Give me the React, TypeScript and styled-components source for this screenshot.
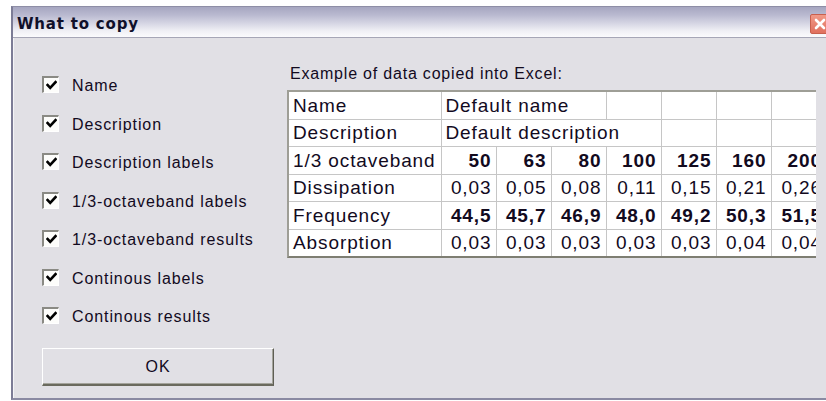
import React from 'react'
import styled, { createGlobalStyle } from 'styled-components'

const GlobalStyle = createGlobalStyle`
  html, body {
    margin: 0;
    padding: 0;
    background: #ffffff;
    overflow: hidden;
  }
`

const options = [
  'Name',
  'Description',
  'Description labels',
  '1/3-octaveband labels',
  '1/3-octaveband results',
  'Continous labels',
  'Continous results',
]

const bands = ['50', '63', '80', '100', '125', '160', '200']

const dataRows = [
  { label: 'Dissipation', bold: false, values: ['0,03', '0,05', '0,08', '0,11', '0,15', '0,21', '0,26'] },
  { label: 'Frequency', bold: true, values: ['44,5', '45,7', '46,9', '48,0', '49,2', '50,3', '51,5'] },
  { label: 'Absorption', bold: false, values: ['0,03', '0,03', '0,03', '0,03', '0,03', '0,04', '0,04'] },
]

const CheckMark = () => (
  <svg width="11" height="11" viewBox="0 0 11 11">
    <polyline points="1.5,5 4.2,7.8 9.5,2.2" fill="none" stroke="#000" strokeWidth="2.6" strokeLinecap="square" />
  </svg>
)

const CloseGlyph = () => (
  <svg width="12" height="12" viewBox="0 0 12 12">
    <path d="M2 2 L10 10 M10 2 L2 10" stroke="#fff" strokeWidth="2.6" strokeLinecap="round" />
  </svg>
)

const App: React.FC = () => {
  return (
    <>
      <GlobalStyle />
      <StyledWindow>
        <StyledTitleBar>
          <StyledTitle>What to copy</StyledTitle>
          <StyledClose>
            <CloseGlyph />
          </StyledClose>
        </StyledTitleBar>
        <StyledBody>
          <StyledOptions>
            {options.map((label) => (
              <StyledOption key={label}>
                <StyledCheckbox>
                  <CheckMark />
                </StyledCheckbox>
                <StyledLabel>{label}</StyledLabel>
              </StyledOption>
            ))}
            <StyledButton>OK</StyledButton>
          </StyledOptions>
          <StyledPreview>
            <StyledCaption>Example of data copied into Excel:</StyledCaption>
            <StyledTableFrame>
              <StyledTable>
                <colgroup>
                  <col style={{ width: 152 }} />
                  {bands.map((b) => (
                    <col key={b} style={{ width: 55 }} />
                  ))}
                </colgroup>
                <tbody>
                  <tr>
                    <StyledCell>Name</StyledCell>
                    <StyledCell colSpan={3}>Default name</StyledCell>
                    <StyledCell />
                    <StyledCell />
                    <StyledCell />
                    <StyledCell />
                  </tr>
                  <tr>
                    <StyledCell>Description</StyledCell>
                    <StyledCell colSpan={4}>Default description</StyledCell>
                    <StyledCell />
                    <StyledCell />
                    <StyledCell />
                  </tr>
                  <tr>
                    <StyledCell>1/3 octaveband</StyledCell>
                    {bands.map((b) => (
                      <StyledCell key={b} $numeric $bold>{b}</StyledCell>
                    ))}
                  </tr>
                  {dataRows.map((row) => (
                    <tr key={row.label}>
                      <StyledCell>{row.label}</StyledCell>
                      {row.values.map((v, i) => (
                        <StyledCell key={i} $numeric $bold={row.bold}>{v}</StyledCell>
                      ))}
                    </tr>
                  ))}
                </tbody>
              </StyledTable>
            </StyledTableFrame>
          </StyledPreview>
        </StyledBody>
      </StyledWindow>
    </>
  )
}

export default App

const StyledWindow = styled.div`
  margin: 6px 0 0 11px;
  width: 819px;
  border-top: 1px solid #8e8ea6;
  border-left: 2px solid #7c7c96;
  border-bottom: 2px solid #8a8aa2;
  font-family: 'Liberation Sans', Arial, sans-serif;
  color: #120a1e;
`

const StyledTitleBar = styled.div`
  height: 31px;
  box-sizing: border-box;
  display: flex;
  align-items: center;
  justify-content: space-between;
  padding: 3px 0 0 4px;
  background: linear-gradient(to bottom, #a6a6c0 0%, #b8b8cf 25%, #d6d6e4 55%, #f0f0f5 80%, #fbfbfd 100%);
  border-bottom: 1px solid #a6a6b6;
`

const StyledTitle = styled.span`
  font-family: 'DejaVu Sans', Tahoma, sans-serif;
  font-weight: bold;
  font-size: 15px;
  letter-spacing: 0.8px;
  color: #10102a;
`

const StyledClose = styled.div`
  width: 18px;
  height: 18px;
  margin: 0 2px 0 0;
  display: flex;
  align-items: center;
  justify-content: center;
  background: linear-gradient(to bottom, #f09a88, #e0705e);
  border: 1px solid #c8604e;
  border-radius: 2px;
`

const StyledBody = styled.div`
  height: 360px;
  display: flex;
  background: #e1e0e5;
  box-shadow: inset 1px 0 #f4f4f7;
`

const StyledOptions = styled.div`
  width: 245px;
  padding: 27.5px 0 0 29px;
  display: flex;
  flex-direction: column;
`

const StyledOption = styled.div`
  height: 38.5px;
  display: flex;
  align-items: center;
  gap: 13px;
`

const StyledCheckbox = styled.div`
  width: 14px;
  height: 14px;
  display: flex;
  align-items: center;
  justify-content: center;
  background: #fdfdfb;
  border-top: 2px solid #8a8a84;
  border-left: 2px solid #8a8a84;
  border-right: 1px solid #ffffff;
  border-bottom: 1px solid #ffffff;
`

const StyledLabel = styled.span`
  font-size: 16px;
  letter-spacing: 0.9px;
  margin-top: 3px;
`

const StyledButton = styled.button`
  margin-top: 13px;
  width: 232px;
  height: 38px;
  padding: 0;
  font-family: 'Liberation Sans', Arial, sans-serif;
  font-size: 16px;
  letter-spacing: 0.9px;
  color: #120a1e;
  background: #e1e0e5;
  border-top: 1px solid #ffffff;
  border-left: 1px solid #ffffff;
  border-right: 1px solid #5e5e54;
  border-bottom: 2px solid #6a6a5e;
  box-shadow: inset -1px -1px #a4a49c;
`

const StyledPreview = styled.div`
  padding-top: 27px;
  display: flex;
  flex-direction: column;
`

const StyledCaption = styled.div`
  height: 18px;
  padding-left: 3px;
  font-size: 16px;
  letter-spacing: 0.8px;
  margin-bottom: 7px;
`

const StyledTableFrame = styled.div`
  width: 527px;
  overflow: hidden;
  background: #ffffff;
  border-top: 2px solid #9e9e96;
  border-left: 2px solid #9e9e96;
  border-bottom: 2px solid #7e7e72;
`

const StyledTable = styled.table`
  width: 537px;
  table-layout: fixed;
  border-collapse: collapse;
  border-style: hidden;
`

const StyledCell = styled.td<{ $numeric?: boolean; $bold?: boolean }>`
  height: 26.5px;
  padding: 0 ${(p) => (p.$numeric ? '4px' : '0')} 0 ${(p) => (p.$numeric ? '0' : '4px')};
  border: 1px solid #c6c6c6;
  font-size: 19px;
  letter-spacing: 0.9px;
  font-weight: ${(p) => (p.$bold ? 'bold' : 'normal')};
  text-align: ${(p) => (p.$numeric ? 'right' : 'left')};
  white-space: nowrap;
  overflow: hidden;
  line-height: 1;
`
